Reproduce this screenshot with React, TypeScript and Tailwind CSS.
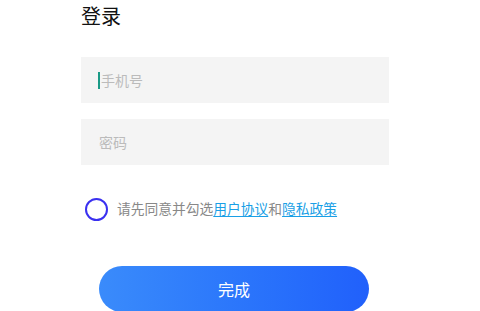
export default function App() {
  const font = { fontFamily: '"Noto Sans CJK SC", "Noto Sans", sans-serif' };
  return (
    <div className="w-[480px] h-[311px] bg-white overflow-hidden" style={font}>
      <div className="pl-[81px] pt-[2px] flex flex-col">
        <div className="text-[20px] leading-[28px] text-[#111] h-[28px]">登录</div>
        <div className="mt-[27px] w-[308px] h-[46px] bg-[#f4f4f4] flex items-center pl-[17px]">
          <span className="w-[2px] h-[17px] bg-[#1a9a86] mr-[1px]"></span>
          <span className="text-[14px] text-[#bbbbbb]">手机号</span>
        </div>
        <div className="mt-[16px] w-[308px] h-[46px] bg-[#f4f4f4] flex items-center pl-[18px]">
          <span className="text-[14px] text-[#bbbbbb]">密码</span>
        </div>
        <div className="mt-[33px] flex items-center pl-[4px] h-[22px]">
          <span className="w-[23px] h-[23px] rounded-full border-[2px] border-[#3a30f0]"></span>
          <span className="ml-[9px] text-[13.75px] leading-[20px] text-[#888888] -mt-[2px]">
            请先同意并勾选
            <span className="text-[#1a9fe6] underline underline-offset-2">用户协议</span>
            和
            <span className="text-[#1a9fe6] underline underline-offset-2">隐私政策</span>
          </span>
        </div>
        <div className="mt-[46px] ml-[18px] w-[270px] h-[46px] rounded-full bg-gradient-to-r from-[#3a8bfb] to-[#2160fb] flex items-center justify-center text-white text-[16px]">
          完成
        </div>
      </div>
    </div>
  );
}
